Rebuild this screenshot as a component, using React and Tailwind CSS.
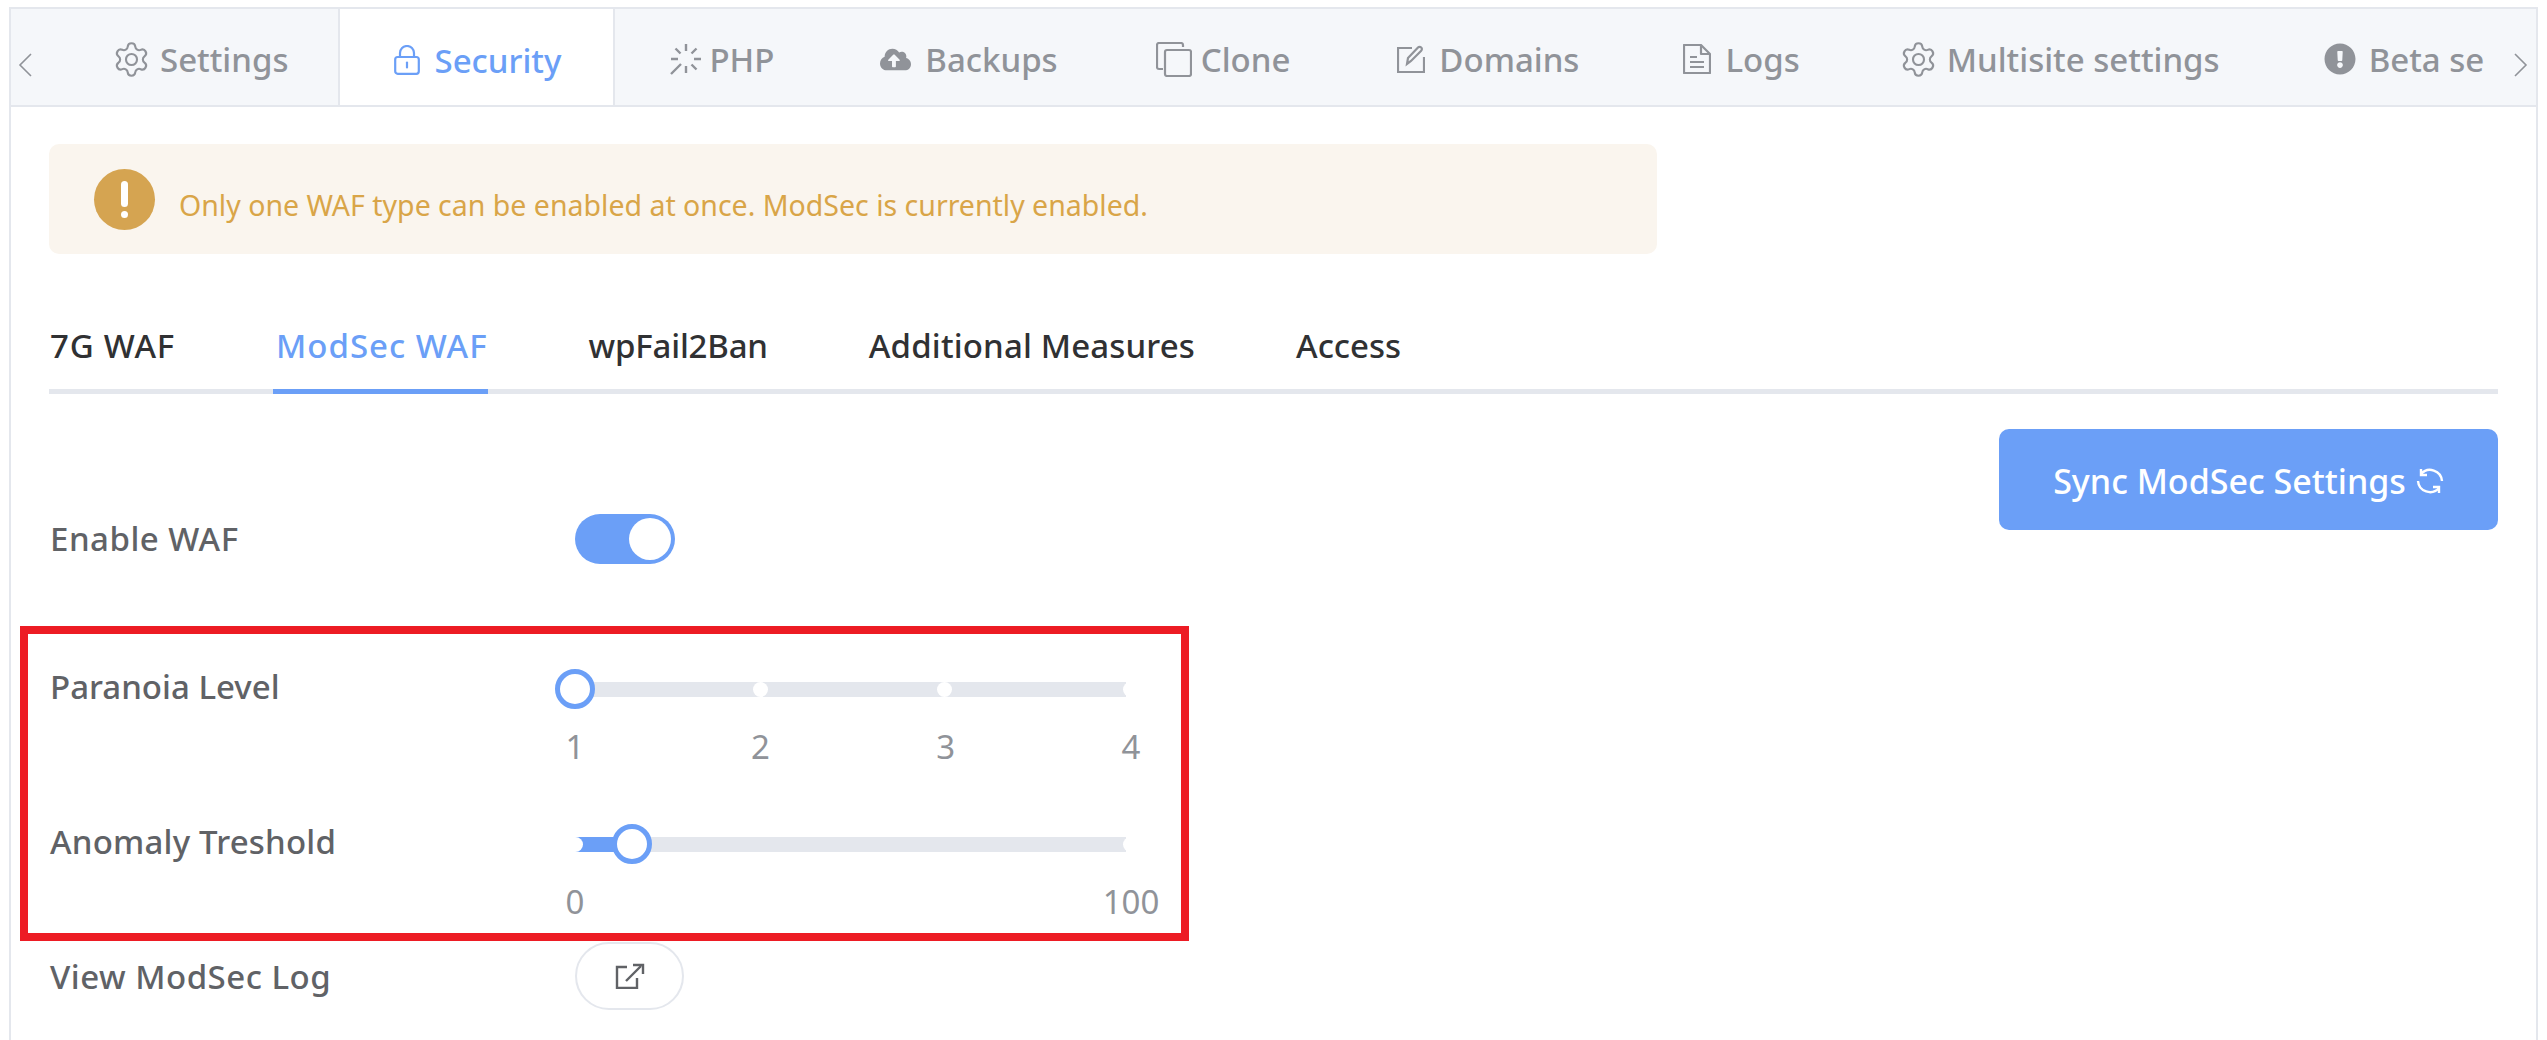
import React from "react";
import { FaCloudUploadAlt, FaExclamationCircle } from "react-icons/fa";

const GearIcon = () => (
  <svg className="-mx-[3px] shrink-0" width="39" height="39" viewBox="0 0 24 24" fill="none" stroke="currentColor" strokeWidth="1.3" strokeLinecap="round" strokeLinejoin="round">
    <path d="M9.671 4.136a2.34 2.34 0 0 1 4.659 0 2.34 2.34 0 0 0 3.319 1.915 2.34 2.34 0 0 1 2.33 4.033 2.34 2.34 0 0 0 0 3.831 2.34 2.34 0 0 1-2.33 4.033 2.34 2.34 0 0 0-3.319 1.915 2.34 2.34 0 0 1-4.659 0 2.34 2.34 0 0 0-3.32-1.915 2.34 2.34 0 0 1-2.33-4.033 2.34 2.34 0 0 0 0-3.831A2.34 2.34 0 0 1 6.35 6.051a2.34 2.34 0 0 0 3.319-1.915" />
    <circle cx="12" cy="12" r="3.4" />
  </svg>
);
const LockIcon = () => (
  <svg width="26" height="30" viewBox="0 0 26 30" fill="none" stroke="currentColor" strokeWidth="2.2" strokeLinecap="round">
    <rect x="1.2" y="12" width="23.6" height="16.8" rx="2.5" />
    <path d="M6 12V8a7 7 0 0 1 14 0v4" />
    <path d="M13 17.5v5" />
  </svg>
);
const LoadingIcon = () => (
  <svg width="40" height="40" viewBox="0 0 40 40" fill="none" stroke="currentColor" strokeWidth="2.4">
    <path d="M20 5v7M20 27v7M35 20h-7M5 20h7M30.5 9.5l-5 5M9.5 9.5l5 5M30.5 30.5l-5-5M5 35l10-10" />
  </svg>
);
const CopyIcon = () => (
  <svg width="36" height="35" viewBox="0 0 36 35" fill="none" stroke="currentColor" strokeWidth="2.2" strokeLinejoin="round">
    <path d="M27 5V3a2 2 0 0 0-2-2H3a2 2 0 0 0-2 2v22a2 2 0 0 0 2 2h4" />
    <rect x="9" y="8" width="26" height="26" rx="2" />
  </svg>
);
const EditIcon = () => (
  <svg width="28" height="28" viewBox="0 0 28 28" fill="none" stroke="currentColor" strokeWidth="2.2">
    <path d="M15 3H1v24h26V12" />
    <path d="M10 19l1-6L21 2.5a2.2 2.2 0 0 1 3.2 0 2.2 2.2 0 0 1 0 3.2L14 16z" />
  </svg>
);
const DocIcon = () => (
  <svg width="28" height="30" viewBox="0 0 28 30" fill="none" stroke="currentColor" strokeWidth="2.2" strokeLinejoin="round">
    <path d="M1 1h17l9 9v19H1z" />
    <path d="M18 1v9h9M7 13h7M7 18h14M7 23h14" />
  </svg>
);
const SyncIcon = () => (
  <svg width="28" height="28" viewBox="0 0 28 28" fill="none" stroke="currentColor" strokeWidth="2.4" className="text-white">
    <path d="M26 14A12 12 0 0 0 5 7" />
    <path d="M5 2v6h6" />
    <path d="M2 14a12 12 0 0 0 21 7" />
    <path d="M23 26v-6h-6" />
  </svg>
);
const LinkIcon = () => (
  <svg width="30" height="26" viewBox="0 0 30 26" fill="none" stroke="#606266" strokeWidth="2.4">
    <path d="M12 4H2v21h20V15" />
    <path d="M11 18L26 3" />
    <path d="M18 2h10v9" />
  </svg>
);

const tabs = [
  { label: "Settings", icon: <GearIcon />, cls: "gap-[12px] pl-[52px] pr-[50px]" },
  { label: "Security", icon: <LockIcon />, cls: "gap-[14px] pl-[54px] pr-[52px] bg-white border-l-2 border-r-2 border-[#e4e7ed] text-[#6b9ff7] h-[98px]" },
  { label: "PHP", icon: <LoadingIcon />, cls: "gap-[3px] pl-[51px] pr-[54px]" },
  { label: "Backups", icon: <FaCloudUploadAlt size={31} />, cls: "gap-[14px] pl-[52px] pr-[46px]" },
  { label: "Clone", icon: <CopyIcon />, cls: "gap-[9px] pl-[52px] pr-[55px]" },
  { label: "Domains", icon: <EditIcon />, cls: "gap-[14px] pl-[52px] pr-[52px]" },
  { label: "Logs", icon: <DocIcon />, cls: "gap-[14px] pl-[52px] pr-[50px]" },
  { label: "Multisite settings", icon: <GearIcon />, cls: "gap-[12px] pl-[52px] pr-[52px]" },
  { label: "Beta settings", icon: <FaExclamationCircle size={32} />, cls: "gap-[13px] pl-[52px] pr-[52px]" },
];
const subTabs = [
  { label: "7G WAF", cls: "tracking-[0.8px]" },
  { label: "ModSec WAF", cls: "tracking-[1px] text-[#6b9ff7] border-b-[5px] border-[#6b9ff7] pl-[3px] -ml-[3px]" },
  { label: "wpFail2Ban", cls: "-tracking-[0.2px]" },
  { label: "Additional Measures", cls: "tracking-[0.15px]" },
  { label: "Access", cls: "" },
];

function Slider({ value, stops, labels }) {
  return (
    <div className="w-[570px]">
      <div className="relative h-[40px] w-[551px] flex items-center">
        <div className="h-[15px] w-full bg-[#e4e7ed] relative">
          {value > 0 && <div className="absolute left-0 top-0 h-full bg-[#6b9ff7]" style={{ width: `${value}%` }} />}
          {stops.map((s) => (
            <span key={s} className="absolute top-0 h-[15px] w-[15px] -ml-[7px] rounded-full bg-white" style={{ left: `${s}%` }} />
          ))}
        </div>
        <span
          className="absolute top-0 h-[40px] w-[40px] -ml-[20px] rounded-full border-[5px] border-[#6b9ff7] bg-white"
          style={{ left: `${value * 1.03}%` }}
        />
      </div>
      <div className="w-[556px] flex justify-between mt-[20px] text-[33px] leading-[36px] font-normal text-[#909399]">
        {labels.map((l) => (
          <span key={l} className="w-0 flex justify-center">{l}</span>
        ))}
      </div>
    </div>
  );
}

export default function App() {
  return (
    <div className="relative h-[1040px] w-[2547px] overflow-hidden bg-white font-['Noto_Sans',sans-serif] pt-[7px] pl-[9px] pr-[9px]">
      <div className="h-full border-l-2 border-r-2 border-t-2 border-[#e4e7ed] bg-white">
        <div className="flex h-[98px] bg-[#f5f7fa] border-b-2 border-[#e4e7ed] text-[#909399]">
          <div className="w-[52px] shrink-0 flex items-center pl-[7px] pt-[16px]">
            <svg width="14" height="24" viewBox="0 0 14 24" fill="none" stroke="#909399" strokeWidth="1.6"><path d="M13 1L2 12l11 11" /></svg>
          </div>
          <div className="flex-1 min-w-0 overflow-hidden flex">
            {tabs.map((t) => (
              <div key={t.label} className={`shrink-0 h-[96px] flex items-center pt-[4px] ${t.cls}`}>
                {t.icon}
                <span className="text-[33px] font-medium leading-none whitespace-nowrap">{t.label}</span>
              </div>
            ))}
          </div>
          <div className="w-[52px] shrink-0 flex items-center justify-end pr-[8px] pt-[16px]">
            <svg width="14" height="24" viewBox="0 0 14 24" fill="none" stroke="#909399" strokeWidth="1.6"><path d="M1 1l11 11L1 23" /></svg>
          </div>
        </div>

        <div className="px-[38px] pt-[37px]">
          <div className="w-[1608px] h-[110px] rounded-[10px] bg-[#faf5ee] flex items-center pl-[45px] gap-[24px]">
            <span className="w-[61px] h-[61px] rounded-full bg-[#d5a451] flex flex-col items-center justify-center gap-[4px] shrink-0">
              <span className="w-[7px] h-[26px] rounded-full bg-white" />
              <span className="w-[7px] h-[7px] rounded-full bg-white" />
            </span>
            <span className="text-[28.5px] text-[#d9a548] pt-[12px] whitespace-nowrap">
              Only one WAF type can be enabled at once. ModSec is currently enabled.
            </span>
          </div>

          <div className="mt-[46px] border-b-[5px] border-[#e4e7ed] flex gap-[101px] text-[33px] font-medium text-[#303133] h-[94px] pl-[1px]">
            {subTabs.map((s) => (
              <div key={s.label} className={`h-[94px] -mb-[5px] pt-[18px] leading-[56px] whitespace-nowrap ${s.cls}`}>
                {s.label}
              </div>
            ))}
          </div>

          <button className="float-right mt-[35px] h-[101px] w-[499px] rounded-[10px] bg-[#6b9ff7] text-white text-[34px] font-medium flex items-center justify-center gap-[10px] pt-[3px]">
            Sync ModSec Settings <SyncIcon />
          </button>

          <div className="text-[33px] font-medium text-[#606266]">
            <div className="pt-[120px] flex items-center">
              <div className="w-[526px] pl-[1px] tracking-[0.5px]">Enable WAF</div>
              <span className="w-[100px] h-[50px] rounded-full bg-[#6b9ff7] flex items-center justify-end pr-[4px]">
                <span className="w-[42px] h-[42px] rounded-full bg-white" />
              </span>
            </div>

            <div className="flex mt-[105px] font-normal">
              <div className="w-[526px] pl-[1px] h-[36px] leading-[36px] font-medium">Paranoia Level</div>
              <Slider value={0} stops={[33.6, 67, 100.7]} labels={["1", "2", "3", "4"]} />
            </div>

            <div className="flex mt-[59px] font-normal">
              <div className="w-[526px] pl-[1px] h-[36px] leading-[36px] font-medium tracking-[0.2px]">Anomaly Treshold</div>
              <Slider value={10} stops={[0, 100.7]} labels={["0", "100"]} />
            </div>

            <div className="flex items-center mt-[22px]">
              <div className="w-[526px] pl-[1px] pt-[2px] tracking-[0.5px]">View ModSec Log</div>
              <button className="w-[109px] h-[68px] rounded-full border-2 border-[#e4e7ed] flex items-center justify-center bg-white">
                <LinkIcon />
              </button>
            </div>
          </div>
        </div>
      </div>

      <div className="absolute left-[20px] top-[626px] w-[1169px] h-[315px] border-[8px] border-[#ed1c24] pointer-events-none" />
    </div>
  );
}
